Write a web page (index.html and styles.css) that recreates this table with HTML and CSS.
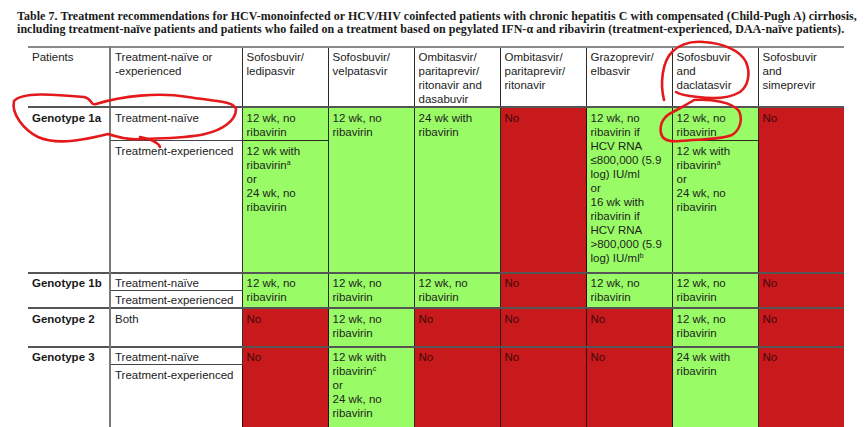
FILE: index.html
```html
<!DOCTYPE html>
<html lang="en">
<head>
<meta charset="utf-8">
<title>Table 7</title>
<link rel="stylesheet" href="styles.css">
</head>
<body>
<div class="page">
  <p class="caption">Table 7. Treatment recommendations for HCV-monoinfected or HCV/HIV coinfected patients with chronic hepatitis C with compensated (Child-Pugh A) cirrhosis,<br>including treatment-naïve patients and patients who failed on a treatment based on pegylated IFN-α and ribavirin (treatment-experienced, DAA-naïve patients).</p>
  <table class="tx">
    <colgroup>
      <col class="c-geno"><col class="c-pt">
      <col class="c-d"><col class="c-d"><col class="c-d"><col class="c-d"><col class="c-d"><col class="c-d"><col class="c-d">
    </colgroup>
    <thead>
      <tr class="hd">
        <th class="h-geno">Patients</th>
        <th class="h-pt">Treatment-naïve or<br>-experienced</th>
        <th>Sofosbuvir/<br>ledipasvir</th>
        <th>Sofosbuvir/<br>velpatasvir</th>
        <th>Ombitasvir/<br>paritaprevir/<br>ritonavir and<br>dasabuvir</th>
        <th>Ombitasvir/<br>paritaprevir/<br>ritonavir</th>
        <th>Grazoprevir/<br>elbasvir</th>
        <th>Sofosbuvir<br>and<br>daclatasvir</th>
        <th>Sofosbuvir<br>and<br>simeprevir</th>
      </tr>
    </thead>
    <tbody>
      <tr class="grp r1an">
        <td class="geno" rowspan="2">Genotype 1a</td>
        <td class="pt">Treatment-naïve</td>
        <td class="g">12 wk, no<br>ribavirin</td>
        <td class="g" rowspan="2">12 wk, no<br>ribavirin</td>
        <td class="g" rowspan="2">24 wk with<br>ribavirin</td>
        <td class="r" rowspan="2">No</td>
        <td class="g" rowspan="2">12 wk, no<br>ribavirin if<br>HCV RNA<br>≤800,000 (5.9<br>log) IU/ml<br>or<br>16 wk with<br>ribavirin if<br>HCV RNA<br>&gt;800,000 (5.9<br>log) IU/ml<sup>b</sup></td>
        <td class="g">12 wk, no<br>ribavirin</td>
        <td class="r" rowspan="2">No</td>
      </tr>
      <tr class="r1ae">
        <td class="pt">Treatment-experienced</td>
        <td class="g">12 wk with<br>ribavirin<sup>a</sup><br>or<br>24 wk, no<br>ribavirin</td>
        <td class="g">12 wk with<br>ribavirin<sup>a</sup><br>or<br>24 wk, no<br>ribavirin</td>
      </tr>
      <tr class="grp r1bn">
        <td class="geno" rowspan="2">Genotype 1b</td>
        <td class="pt">Treatment-naïve</td>
        <td class="g" rowspan="2">12 wk, no<br>ribavirin</td>
        <td class="g" rowspan="2">12 wk, no<br>ribavirin</td>
        <td class="g" rowspan="2">12 wk, no<br>ribavirin</td>
        <td class="r" rowspan="2">No</td>
        <td class="g" rowspan="2">12 wk, no<br>ribavirin</td>
        <td class="g" rowspan="2">12 wk, no<br>ribavirin</td>
        <td class="r" rowspan="2">No</td>
      </tr>
      <tr class="r1be">
        <td class="pt">Treatment-experienced</td>
      </tr>
      <tr class="grp r2">
        <td class="geno">Genotype 2</td>
        <td class="pt">Both</td>
        <td class="r">No</td>
        <td class="g">12 wk, no<br>ribavirin</td>
        <td class="r">No</td>
        <td class="r">No</td>
        <td class="r">No</td>
        <td class="g">12 wk, no<br>ribavirin</td>
        <td class="r">No</td>
      </tr>
      <tr class="grp r3n">
        <td class="geno" rowspan="2">Genotype 3</td>
        <td class="pt">Treatment-naïve</td>
        <td class="r" rowspan="2">No</td>
        <td class="g" rowspan="2">12 wk with<br>ribavirin<sup>c</sup><br>or<br>24 wk, no<br>ribavirin</td>
        <td class="r" rowspan="2">No</td>
        <td class="r" rowspan="2">No</td>
        <td class="r" rowspan="2">No</td>
        <td class="g" rowspan="2">24 wk with<br>ribavirin</td>
        <td class="r" rowspan="2">No</td>
      </tr>
      <tr class="r3e">
        <td class="pt">Treatment-experienced</td>
      </tr>
    </tbody>
  </table>
  <svg class="ink" width="865" height="427" viewBox="0 0 865 427" aria-hidden="true">
    <path d="M 14,101 C 22,92 52,94 84,97 C 93,99 90,106 96,104 C 122,96 158,92 188,97 C 212,101 234,101 236,109 C 236,121 222,130 205,134 C 182,139 160,138 140,139 C 128,140 118,137 108,134 C 88,139 58,146 38,137 C 24,130 11,114 14,101 Z" />
    <path d="M 140,137 C 150,139 158,142 160,147" />
    <path d="M 664,100 C 660,84 662,62 672,52 C 680,44 692,41 704,42 C 722,43 740,50 746,62 C 751,74 748,86 740,92 C 728,99 712,99 698,97 C 688,96 680,95 676,92" />
    <path d="M 694,100 C 712,99 732,102 739,111 C 743,120 740,130 732,135 C 720,140 698,139 680,141 C 670,142 662,140 661,133 C 659,124 664,116 673,112 C 680,108 688,104 694,100" />
  </svg>
</div>
</body>
</html>
```

FILE: styles.css
```css
html, body {
  margin: 0;
  padding: 0;
  background: #ffffff;
}

.page {
  position: relative;
  width: 865px;
  height: 427px;
  overflow: hidden;
  padding: 10px 0 0 17px;
  box-sizing: border-box;
}

.caption {
  margin: 0 0 10px 0;
  font-family: "Liberation Serif", "Times New Roman", serif;
  font-weight: bold;
  font-size: 12px;
  letter-spacing: 0.05px;
  line-height: 13px;
  color: #1a1a1a;
  white-space: nowrap;
}

.tx {
  margin-left: 11px;
  border-collapse: collapse;
  table-layout: fixed;
  width: 816px;
  font-family: "Liberation Sans", Arial, sans-serif;
  font-size: 11.5px;
  line-height: 14px;
  color: #222222;
}

.c-geno { width: 82px; }
.c-pt { width: 132px; }
.c-d { width: 86px; }

.tx th,
.tx td {
  text-align: left;
  vertical-align: top;
  font-weight: normal;
  padding: 3px 4px 1px 4px;
  white-space: nowrap;
}

.hd {
  height: 60px;
}

.hd th {
  padding-top: 2px;
  padding-bottom: 0;
  border-top: 2px solid #8a8a8a;
  border-bottom: 2px solid #555555;
  border-right: 1px solid #2a2a2a;
}

.hd th.h-geno {
  border-right: 2px solid #7a7a7a;
}

.hd th:last-child {
  border-right: none;
}

.tx td.geno {
  font-weight: bold;
  color: #1a1a1a;
  border-right: 2px solid #7a7a7a;
}

.pt {
  border-right: 1px solid #333333;
  border-bottom: 1px solid #444444;
}

.grp td {
  border-top: 2px solid #555555;
}

.g {
  background: #99fb66;
  color: #1f1f1f;
  border: 1px solid #2a2a1a;
}

.r {
  background: #c8191c;
  color: #3e0808;
  border: 1px solid #2e0c0c;
}

.tx td:last-child {
  border-right: none;
}

sup {
  font-size: 7px;
  line-height: 0;
  vertical-align: 4px;
}

.r1an { height: 31px; }
.r1ae { height: 132px; }
.r1bn { height: 17px; }
.r1be { height: 17px; }
.r2 { height: 39px; }
.r3n { height: 18px; }
.r3e { height: 70px; }

.r1bn td,
.r1be td,
.r3n td {
  padding-top: 2px;
  padding-bottom: 0;
}

.ink {
  position: absolute;
  left: 0;
  top: 0;
  pointer-events: none;
  fill: none;
  stroke: #e3191b;
  stroke-width: 2.6;
  stroke-linecap: round;
  stroke-linejoin: round;
}
```
